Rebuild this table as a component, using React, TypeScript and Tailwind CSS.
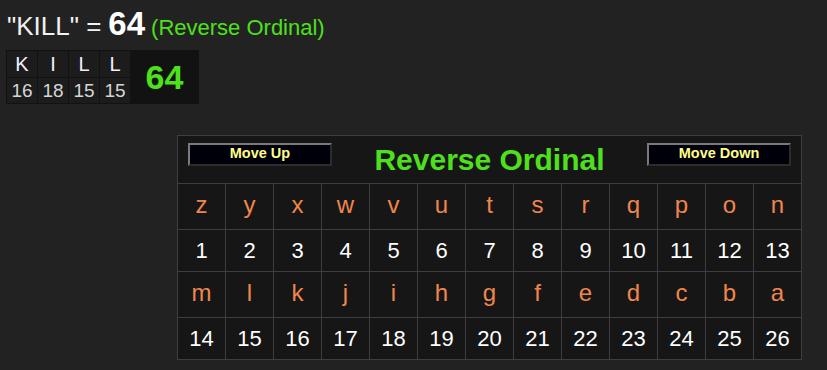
const letters = "zyxwvutsrqponmlkjihgfedcba".split("");

const word = [
  { ch: "K", val: 16 },
  { ch: "I", val: 18 },
  { ch: "L", val: 15 },
  { ch: "L", val: 15 },
];

function MoveButton({ label }: { label: string }) {
  return (
    <button className="mt-[7px] w-[144px] h-[23px] bg-[#00000a] border-2 border-t-[#7a7a7a] border-l-[#7a7a7a] border-b-[#2c2c2c] border-r-[#2c2c2c] text-[#ffff88] font-bold text-[14.5px] leading-none pb-[2px]">
      {label}
    </button>
  );
}

function CipherTable() {
  const rows = [letters.slice(0, 13), letters.slice(13)];
  return (
    <div className="w-[625px] bg-[#3e3e3e] p-px grid grid-cols-[repeat(13,47px)] gap-px">
      <div className="col-span-13 h-[47px] bg-[#161616] flex items-start justify-between px-[10px]">
        <MoveButton label="Move Up" />
        <span className="self-center text-[#4ee01c] font-bold text-[30px] leading-none">
          Reverse Ordinal
        </span>
        <MoveButton label="Move Down" />
      </div>
      {rows.map((row, r) => (
        <div key={r} className="contents">
          {row.map((l) => (
            <div
              key={l}
              className="h-[45px] bg-[#161616] flex items-center justify-center text-[24px] text-[#f0864c] leading-none pb-[3px]"
            >
              {l}
            </div>
          ))}
          {row.map((l, i) => (
            <div
              key={l + "n"}
              className="h-[41px] bg-[#161616] flex items-center justify-center text-[22px] text-white leading-none"
            >
              {r * 13 + i + 1}
            </div>
          ))}
        </div>
      ))}
    </div>
  );
}

export default function App() {
  return (
    <div
      className="w-[827px] h-[370px] bg-[#222222] overflow-hidden"
      style={{ fontFamily: '"Liberation Sans", Arial, sans-serif' }}
    >
      <div className="pl-[7px] pt-[7px] h-[44px] flex items-baseline text-[#f2f2f2] leading-none">
        <span className="text-[26px]">"KILL" =</span>
        <span className="ml-[7px] text-[33px] font-bold text-white">64</span>
        <span className="ml-[6px] text-[22px] text-[#4ee01c]">(Reverse Ordinal)</span>
      </div>

      <div className="ml-[6px] mt-[6px] w-[193px] h-[54px] bg-[#121212] p-px flex gap-px">
        <div className="grid grid-cols-[repeat(4,30px)] grid-rows-[26px_25px] gap-px">
          {word.map((w, i) => (
            <div
              key={"c" + i}
              className="bg-[#1c1c1c] flex items-center justify-center text-[20px] text-[#eef0ff] leading-none"
            >
              {w.ch}
            </div>
          ))}
          {word.map((w, i) => (
            <div
              key={"v" + i}
              className="bg-[#1c1c1c] flex items-center justify-center text-[19px] text-[#d6d6d6] leading-none"
            >
              {w.val}
            </div>
          ))}
        </div>
        <div className="flex-1 flex items-center justify-center text-[34px] font-bold text-[#4ee01c] leading-none bg-[#121212]">
          64
        </div>
      </div>

      <div className="ml-[177px] mt-[31px]">
        <CipherTable />
      </div>
    </div>
  );
}
